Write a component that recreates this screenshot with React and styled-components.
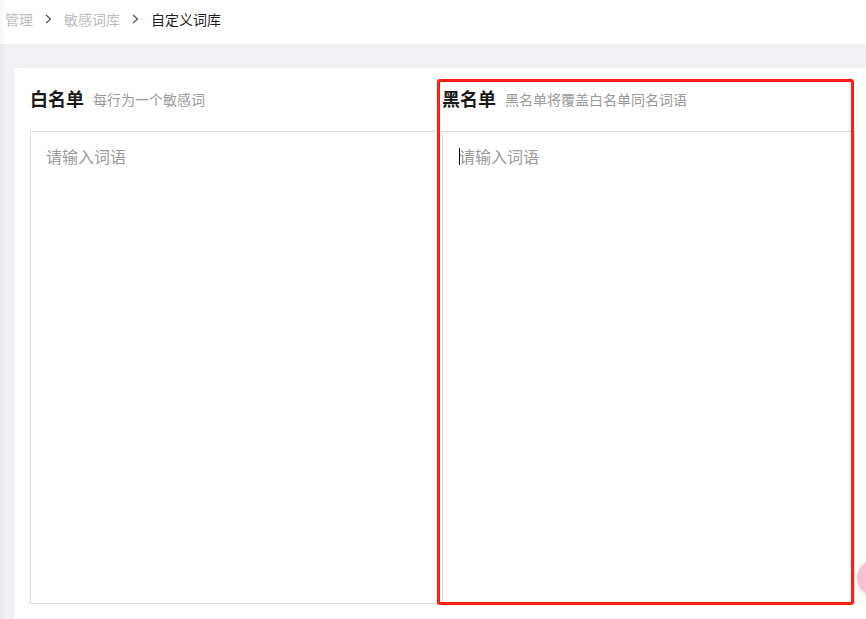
import React from "react";
import styled, { createGlobalStyle } from "styled-components";

const Global = createGlobalStyle`
  html, body { margin: 0; padding: 0; overflow: hidden; }
  body {
    font-family: "Noto Sans CJK SC", "Noto Sans", sans-serif;
    background: #f0f1f5;
  }
  * { box-sizing: border-box; }
`;

const Page = styled.div`
  position: relative;
  width: 866px;
  height: 619px;
  overflow: hidden;
  background: #f0f1f5;
  box-shadow: inset 6px 0 6px -5px rgba(0, 0, 0, 0.06);
`;

const Breadcrumb = styled.nav`
  height: 44px;
  background: #fff;
  display: flex;
  align-items: center;
  padding: 0 0 6px 5px;
  font-size: 14px;
  line-height: 20px;
  box-shadow: inset 6px 0 6px -5px rgba(0, 0, 0, 0.06);
`;

const Crumb = styled.span`
  color: ${(p) => (p.$current ? "#1f1f1f" : "#bdbdbd")};
`;

const Sep = styled.span`
  display: inline-flex;
  margin: 0 12px;
  color: #555;
`;

const Body = styled.div`
  padding: 24px 0 0 14px;
`;

const Card = styled.div`
  width: 857px;
  height: 600px;
  background: #fff;
  border-radius: 4px;
  padding: 16px;
  display: grid;
  grid-template-columns: 412px 413px;
`;

const Column = styled.section`
  display: flex;
  flex-direction: column;
`;

const Header = styled.header`
  height: 28px;
  display: flex;
  align-items: center;
  gap: 9px;
  margin-bottom: 19px;
`;

const Title = styled.h2`
  margin: 0;
  font-size: 18px;
  font-weight: 700;
  color: #1a1a1a;
  line-height: 24px;
`;

const Hint = styled.span`
  font-size: 14px;
  color: #9b9b9b;
  line-height: 20px;
  margin-top: 1px;
`;

const Area = styled.textarea`
  width: 413px;
  height: 473px;
  border: 1px solid #dcdcdc;
  border-radius: 0;
  padding: 12px 16px 12px ${(p) => (p.$first ? "15px" : "16px")};
  font-family: inherit;
  font-size: 16px;
  line-height: 24px;
  color: #333;
  resize: none;
  outline: none;
  caret-color: #000;
  background: #fff;
  &::placeholder { color: #9a9a9a; }
`;

const Caret = styled.span`
  position: absolute;
  left: 459px;
  top: 148px;
  width: 1px;
  height: 17px;
  background: #000;
  pointer-events: none;
`;

const Highlight = styled.div`
  position: absolute;
  left: 437px;
  top: 79px;
  width: 417px;
  height: 526px;
  border: 3px solid #fe1f12;
  border-radius: 3px;
  pointer-events: none;
`;

const FloatBtn = styled.div`
  position: absolute;
  left: 857px;
  top: 561px;
  width: 34px;
  height: 34px;
  border-radius: 50%;
  background: #f9bfd6;
  box-shadow: 0 1px 6px rgba(0, 0, 0, 0.12);
`;

const Chevron = () => (
  <svg width="7" height="10" viewBox="0 0 7 10" fill="none">
    <path d="M1 1l4.5 4L1 9" stroke="#555" strokeWidth="1.3" />
  </svg>
);

export default function App() {
  return (
    <>
      <Global />
      <Page>
        <Breadcrumb>
          <Crumb>管理</Crumb>
          <Sep><Chevron /></Sep>
          <Crumb>敏感词库</Crumb>
          <Sep><Chevron /></Sep>
          <Crumb $current>自定义词库</Crumb>
        </Breadcrumb>
        <Body>
          <Card>
            <Column>
              <Header>
                <Title>白名单</Title>
                <Hint>每行为一个敏感词</Hint>
              </Header>
              <Area $first placeholder="请输入词语" />
            </Column>
            <Column>
              <Header>
                <Title>黑名单</Title>
                <Hint>黑名单将覆盖白名单同名词语</Hint>
              </Header>
              <Area placeholder="请输入词语" />
            </Column>
          </Card>
        </Body>
        <Caret />
        <Highlight />
        <FloatBtn />
      </Page>
    </>
  );
}
